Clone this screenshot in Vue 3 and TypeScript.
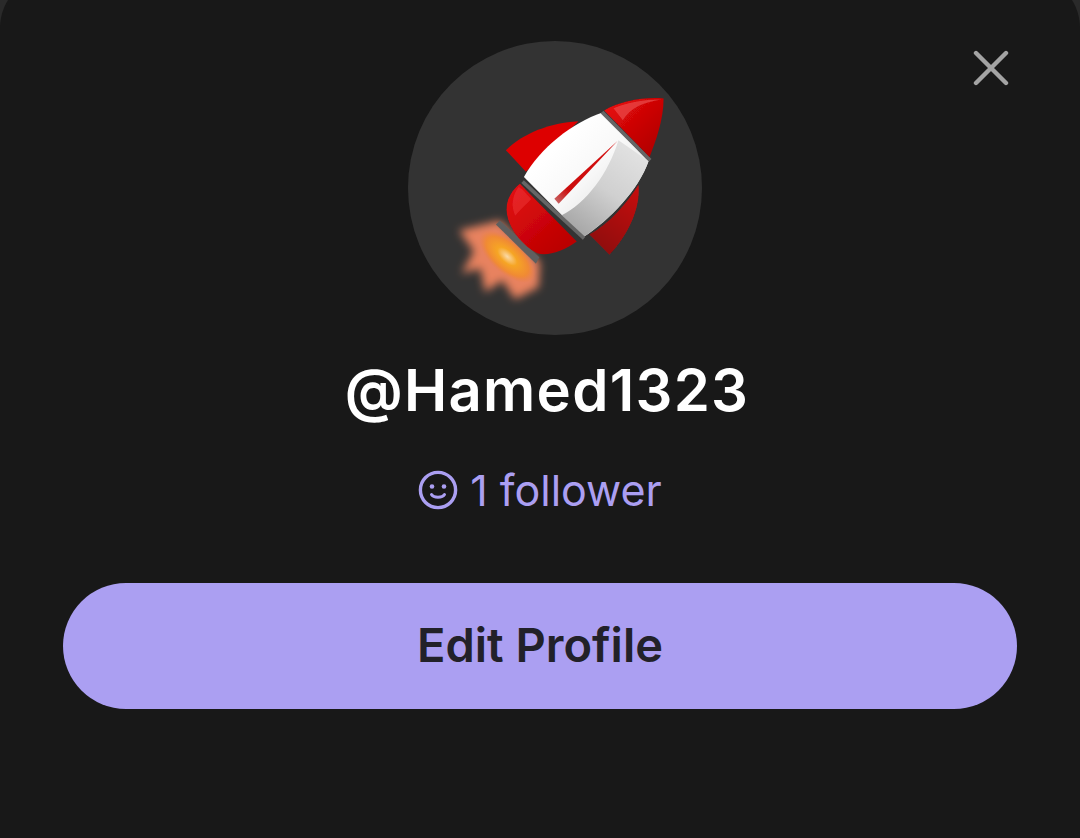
<template>
  <div class="sheet">
    <button class="close" aria-label="Close">
      <svg width="36" height="36" viewBox="0 0 36 36" fill="none">
        <path d="M3 3L33 33M33 3L3 33" stroke="#a3a3a3" stroke-width="4.4" stroke-linecap="round" />
      </svg>
    </button>

    <div class="avatar">
      <svg width="294" height="294" viewBox="25 25 880 880">
        <defs>
          <linearGradient id="body" gradientUnits="userSpaceOnUse" x1="470" y1="340" x2="650" y2="520">
            <stop offset="0" stop-color="#ffffff" />
            <stop offset="0.5" stop-color="#f8f8f8" />
            <stop offset="1" stop-color="#e4e4e4" />
          </linearGradient>
          <linearGradient id="shade" gradientUnits="userSpaceOnUse" x1="700" y1="340" x2="520" y2="590">
            <stop offset="0" stop-color="#e2e2e2" />
            <stop offset="0.5" stop-color="#d0d0d0" />
            <stop offset="1" stop-color="#a6a6a6" />
          </linearGradient>
          <linearGradient id="stripe" gradientUnits="userSpaceOnUse" x1="650" y1="325" x2="468" y2="505">
            <stop offset="0" stop-color="#d41010" />
            <stop offset="0.8" stop-color="#cc0c0c" />
            <stop offset="1" stop-color="#c86060" />
          </linearGradient>
          <linearGradient id="nose" x1="0.1" y1="0.1" x2="0.9" y2="0.9">
            <stop offset="0" stop-color="#e60a0a" />
            <stop offset="1" stop-color="#b00000" />
          </linearGradient>
          <linearGradient id="tail" x1="0.1" y1="0.1" x2="0.8" y2="0.9">
            <stop offset="0" stop-color="#e00d12" />
            <stop offset="1" stop-color="#bb0000" />
          </linearGradient>
          <linearGradient id="finDark" x1="0.8" y1="0" x2="0.3" y2="1">
            <stop offset="0" stop-color="#c40d0d" />
            <stop offset="1" stop-color="#8e1010" />
          </linearGradient>
          <radialGradient id="core">
            <stop offset="0" stop-color="#fbd9a6" />
            <stop offset="0.35" stop-color="#f6a524" />
            <stop offset="0.75" stop-color="#f08a34" />
            <stop offset="1" stop-color="#ea7f48" stop-opacity="0" />
          </radialGradient>
          <filter id="soft" x="-5%" y="-5%" width="110%" height="110%">
            <feGaussianBlur stdDeviation="1.6" />
          </filter>
          <filter id="blur" x="-20%" y="-20%" width="140%" height="140%">
            <feGaussianBlur stdDeviation="12" />
          </filter>
        </defs>

        <!-- flame -->
        <path
          d="M178 592L300 562L420 688L416 762L345 798L308 742L256 776L242 706L186 720L222 654Z"
          fill="#e8825e"
          filter="url(#blur)"
        />
        <ellipse cx="322" cy="670" rx="105" ry="50" transform="rotate(42 322 670)" fill="url(#core)" />

        <g filter="url(#soft)">
          <!-- fins -->
          <path d="M318 352C370 300 450 270 535 265L378 416Z" fill="#dd0000" />
          <path d="M715 455C722 530 680 610 628 665L568 604C630 570 680 510 715 455Z" fill="url(#finDark)" />

          <!-- nozzle -->
          <path d="M300 562L418 672L408 692L288 574Z" fill="#5f5f5f" />

          <!-- tail -->
          <path
            d="M360 452L530 625C490 655 440 670 412 660C370 640 322 585 320 530C320 495 338 470 360 452Z"
            fill="url(#tail)"
          />
          <path d="M356 462C338 484 332 520 346 548C362 528 382 512 394 498L366 468Z" fill="#ee3a3a" opacity="0.5" />

          <!-- body -->
          <path d="M372 432C420 345 520 268 605 240L745 385C715 470 630 560 550 612Z" fill="url(#body)" />
          <path d="M655 322L745 385C715 470 630 560 550 612L482 548C560 510 625 420 655 322Z" fill="url(#shade)" />
          <path d="M368 446L552 616" stroke="#666666" stroke-width="11" />
          <path d="M606 238L750 382" stroke="#666666" stroke-width="11" />
          <path d="M652 324L463 497L476 512Z" fill="url(#stripe)" />

          <!-- nose -->
          <path d="M612 233C660 205 730 192 790 197C790 260 768 320 748 372Z" fill="url(#nose)" />
          <path d="M640 226C680 210 730 200 782 200C730 208 690 226 668 262Z" fill="#f26a6a" opacity="0.5" />
        </g>
      </svg>
    </div>

    <h1 class="name">@Hamed1323</h1>

    <div class="followers">
      <svg width="40" height="40" viewBox="0 0 40 40" fill="none" stroke="#ab9ff2" stroke-width="3.4">
        <circle cx="20" cy="20" r="17.6" />
        <circle cx="14" cy="16.5" r="2.3" fill="#ab9ff2" stroke="none" />
        <circle cx="26" cy="16.5" r="2.3" fill="#ab9ff2" stroke="none" />
        <path d="M13.5 24.5C15.5 28 24.5 28 26.5 24.5" stroke-linecap="round" stroke-width="3" />
      </svg>
      <span>1 follower</span>
    </div>

    <button class="edit">Edit Profile</button>
  </div>
</template>

<script setup lang="ts">
</script>

<style>
body {
  background: #2a2a2a;
}
</style>

<style scoped>
/* the sheet's top edge sits above the viewport, only the corner arcs show */
.sheet {
  position: relative;
  box-sizing: border-box;
  height: 863px;
  margin-top: -25px;
  padding: 66px 63px 0;
  background: #181818;
  border-radius: 53px 53px 0 0;
  display: flex;
  flex-direction: column;
  align-items: center;
  font-family: Inter, "Liberation Sans", sans-serif;
  overflow: hidden;
}
.close {
  position: absolute;
  top: 75px;
  right: 71px;
  padding: 0;
  border: none;
  background: none;
  line-height: 0;
}
.avatar {
  width: 294px;
  height: 294px;
  margin-left: 30px;
  flex: none;
  border-radius: 50%;
  background: #333333;
  overflow: hidden;
}
.name {
  margin: 19px 0 0 14px;
  font-size: 58px;
  line-height: 72px;
  letter-spacing: 1.3px;
  font-weight: 600;
  color: #ffffff;
}
.followers {
  margin-top: 38px;
  display: flex;
  align-items: center;
  gap: 12px;
  height: 52px;
  font-size: 43px;
  color: #ab9ff2;
}
.edit {
  margin-top: 67px;
  padding-bottom: 5px;
  width: 100%;
  height: 126px;
  flex: none;
  border: none;
  border-radius: 63px;
  background: #ab9ff2;
  color: #222129;
  font-family: inherit;
  font-size: 47px;
  font-weight: 600;
}
</style>
